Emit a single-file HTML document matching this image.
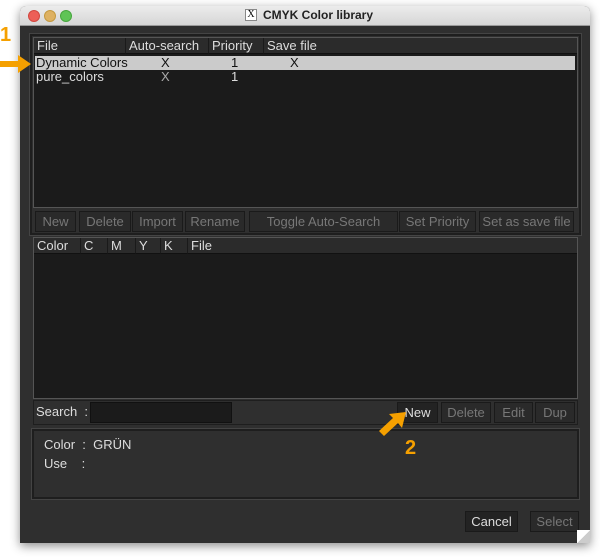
<!DOCTYPE html><html><head><style>
*{margin:0;padding:0;box-sizing:border-box}
body{width:600px;height:560px;background:#fff;position:relative;overflow:hidden;font-family:"Liberation Sans",sans-serif;font-size:13px}
.a{position:absolute}
.win{left:20px;top:6px;width:570px;height:537px;background:#2f2f2f;border-radius:6px 6px 0 0;box-shadow:0 3px 10px rgba(0,0,0,.45)}
.tb{left:20px;top:6px;width:570px;height:20px;background:linear-gradient(#ececec,#d6d6d6);border-radius:6px 6px 0 0;border-bottom:1px solid #9a9a9a}
.dot{width:12px;height:12px;border-radius:50%;top:10px}
.tbl{background:#1b1b1b;border:1px solid #555}
.hd{background:#2b2b2b;color:#ddd;height:16px;line-height:15px;padding-left:3px;border-right:1px solid #1a1a1a;border-bottom:1px solid #111}
.btn{background:#2a2a2a;border:1px solid #1a1a1a;color:#777;text-align:center;line-height:20px;height:21px;font-size:13px}
.on{color:#ddd;background:#232323}
.pan{border:2px solid #1e1e1e;outline:1px solid #444}
.t{color:#ddd}
.or{color:#f5a000;font-weight:bold;font-size:20px}
</style></head><body>
<div class="a win"></div>
<div class="a tb"></div>
<div class="a dot" style="left:28px;background:#ed5f57;border:1px solid #d1473f"></div>
<div class="a dot" style="left:44px;background:#deb161;border:1px solid #c4993f"></div>
<div class="a dot" style="left:60px;background:#5fc456;border:1px solid #47a63e"></div>
<div class="a" style="left:245px;top:9px;width:12px;height:12px;border:1px solid #888;background:#fff;font-size:10px;line-height:10px;text-align:center;font-family:'Liberation Serif',serif">X</div>
<div class="a" style="left:263px;top:8px;font-weight:bold;font-size:12px;color:#222">CMYK Color library</div>

<div class="a pan" style="left:30px;top:34px;width:551px;height:201px"></div>
<div class="a tbl" style="left:33px;top:37px;width:545px;height:171px"></div>
<div class="a hd" style="left:34px;top:38px;width:92px">File</div>
<div class="a hd" style="left:126px;top:38px;width:83px">Auto-search</div>
<div class="a hd" style="left:209px;top:38px;width:55px">Priority</div>
<div class="a hd" style="left:264px;top:38px;width:313px;border-right:none">Save file</div>
<div class="a" style="left:35px;top:56px;width:540px;height:14px;background:#cbcbcb"></div>
<div class="a" style="left:36px;top:56px;line-height:14px;color:#111">Dynamic Colors</div>
<div class="a" style="left:161px;top:56px;line-height:14px;color:#111">X</div>
<div class="a" style="left:231px;top:56px;line-height:14px;color:#111">1</div>
<div class="a" style="left:290px;top:56px;line-height:14px;color:#111">X</div>
<div class="a t" style="left:36px;top:70px;line-height:14px">pure_colors</div>
<div class="a" style="left:161px;top:70px;line-height:14px;color:#aaa">X</div>
<div class="a t" style="left:231px;top:70px;line-height:14px">1</div>
<div class="a btn" style="left:35px;top:211px;width:41px">New</div>
<div class="a btn" style="left:79px;top:211px;width:52px">Delete</div>
<div class="a btn" style="left:132px;top:211px;width:51px">Import</div>
<div class="a btn" style="left:185px;top:211px;width:60px">Rename</div>
<div class="a btn" style="left:249px;top:211px;width:149px">Toggle Auto-Search</div>
<div class="a btn" style="left:399px;top:211px;width:77px">Set Priority</div>
<div class="a btn" style="left:479px;top:211px;width:95px">Set as save file</div>

<div class="a tbl" style="left:33px;top:237px;width:545px;height:162px"></div>
<div class="a hd" style="left:34px;top:238px;width:47px">Color</div>
<div class="a hd" style="left:81px;top:238px;width:27px">C</div>
<div class="a hd" style="left:108px;top:238px;width:28px">M</div>
<div class="a hd" style="left:136px;top:238px;width:25px">Y</div>
<div class="a hd" style="left:161px;top:238px;width:27px">K</div>
<div class="a hd" style="left:188px;top:238px;width:389px;border-right:none">File</div>
<div class="a" style="left:33px;top:400px;width:545px;height:25px;border:1px solid #1e1e1e"></div>
<div class="a t" style="left:36px;top:404px">Search &nbsp;:</div>
<div class="a" style="left:90px;top:402px;width:142px;height:21px;background:#1b1b1b;border:1px solid #111"></div>
<div class="a btn on" style="left:397px;top:402px;width:41px">New</div>
<div class="a btn" style="left:441px;top:402px;width:50px">Delete</div>
<div class="a btn" style="left:494px;top:402px;width:39px">Edit</div>
<div class="a btn" style="left:535px;top:402px;width:40px">Dup</div>

<div class="a pan" style="left:32px;top:429px;width:547px;height:70px"></div>
<div class="a t" style="left:44px;top:437px">Color &nbsp;: &nbsp;GRÜN</div>
<div class="a t" style="left:44px;top:456px">Use &nbsp;&nbsp;&nbsp;:</div>

<div class="a btn on" style="left:465px;top:511px;width:53px">Cancel</div>
<div class="a btn" style="left:530px;top:511px;width:49px">Select</div>
<div class="a" style="left:577px;top:530px;width:13px;height:13px;background:linear-gradient(135deg,#fff 50%,#ccc 50%)"></div>

<div class="a or" style="left:0px;top:24px">1</div>
<svg class="a" style="left:0;top:53px" width="34" height="22"><path d="M0 8 H18 V2 L31 11 L18 20 V14 H0 Z" fill="#f5a000"/></svg>
<div class="a or" style="left:405px;top:437px">2</div>
<svg class="a" style="left:376px;top:410px" width="34" height="30"><path d="M30 2 L26 18 L22 13 L8 26 L3 21 L17 8 L13 4 Z" fill="#f5a000"/></svg>
</body></html>
